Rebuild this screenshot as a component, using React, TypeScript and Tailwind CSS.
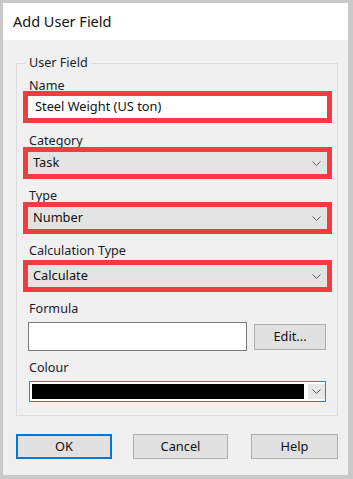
function Chevron() {
  return (
    <svg width="9" height="5" viewBox="0 0 9 5" className="shrink-0">
      <polyline points="0.5,0.5 4.5,4.5 8.5,0.5" fill="none" stroke="#606060" strokeWidth="1" />
    </svg>
  );
}

function Label({ children, className }: { children: React.ReactNode; className: string }) {
  return <div className={`ml-[6px] h-[14px] text-[12.6px] leading-[14px] text-[#1b1b2b] ${className}`}>{children}</div>;
}

function Combo({ value, className }: { value: string; className: string }) {
  return (
    <div className={`border-[5px] border-[#f33c40] ${className}`}>
      <div className="flex h-[22px] items-center justify-between bg-[#e3e3e3] pl-[5px] pr-[6px] text-[12.8px] text-[#111]">
        <span>{value}</span>
        <Chevron />
      </div>
    </div>
  );
}

function Button({ children, primary, className }: { children: React.ReactNode; primary?: boolean; className: string }) {
  return (
    <button
      className={`flex h-[25px] items-center justify-center bg-[#e1e1e1] text-[12.8px] text-[#111] ${
        primary ? "border-2 border-[#0078d7]" : "border border-[#adadad]"
      } ${className}`}
    >
      {children}
    </button>
  );
}

export default function App() {
  return (
    <div className="h-[479px] w-[353px] bg-[#c9c9c9] pt-[3px] pr-[5px] pb-[4px] pl-[3px] font-['Noto_Sans',sans-serif]">
      <div className="flex h-full flex-col bg-[#f0f0f0]">
        <div className="flex h-[37px] items-center bg-white pl-[10px] text-[14.5px] text-[#111]">Add User Field</div>

        <fieldset className="mt-[15px] mr-[10px] ml-[13px] border border-[#dcdcdc]">
          <legend className="ml-[9px] px-[3px] text-[12.6px] leading-[16px] text-[#1b1b2b]">User Field</legend>
          <div className="flex flex-col pr-[5px] pb-[13px] pl-[6px]">
            <Label className="mt-[8px]">Name</Label>
            <div className="-mt-[2px] border-[5px] border-[#f33c40]">
              <div className="flex h-[22px] items-center bg-white pl-[7px] text-[12.8px] text-[#111]">Steel Weight (US ton)</div>
            </div>

            <Label className="mt-[11px]">Category</Label>
            <Combo value="Task" className="-mt-[1px]" />

            <Label className="mt-[10px]">Type</Label>
            <Combo value="Number" className="-mt-[1px]" />

            <Label className="mt-[10px]">Calculation Type</Label>
            <Combo value="Calculate" className="mt-[2px]" />

            <Label className="mt-[10px]">Formula</Label>
            <div className="mt-[6px] ml-[5px] mr-[6px] flex items-center gap-[7px]">
              <div className="h-[29px] w-[219px] border border-[#7a7a7a] bg-white" />
              <Button className="flex-1 h-[26px]">Edit...</Button>
            </div>

            <Label className="mt-[10px]">Colour</Label>
            <div className="mt-[6px] ml-[6px] mr-[6px] flex h-[21px] border border-[#2a84dc] bg-white p-[2px] pr-0">
              <div className="flex-1 bg-black" />
              <div className="ml-[4px] flex w-[17px] items-center justify-center bg-[#e6e6e6]">
                <Chevron />
              </div>
            </div>
          </div>
        </fieldset>

        <div className="mt-[18px] ml-[13px] flex">
          <Button primary className="w-[96px]">OK</Button>
          <Button className="ml-[21px] w-[95px]">Cancel</Button>
          <Button className="ml-[23px] w-[87px]">Help</Button>
        </div>
      </div>
    </div>
  );
}
